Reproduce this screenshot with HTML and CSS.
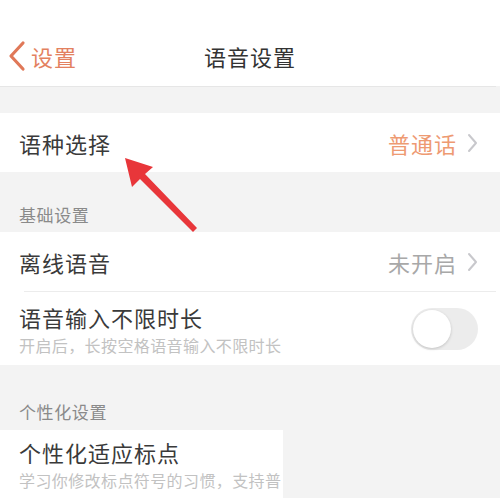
FILE: index.html
```html
<!DOCTYPE html>
<html lang="zh">
<head>
<meta charset="utf-8">
<link rel="stylesheet" href="styles.css">
</head>
<body>
<div class="page">
  <header class="nav">
    <div class="back">
      <svg class="back-icon" width="18" height="32" viewBox="0 0 18 32"><path d="M15 3 L3 16 L15 29" fill="none" stroke="#e07858" stroke-width="3.2" stroke-linecap="round" stroke-linejoin="round"/></svg>
      <span>设置</span>
    </div>
    <div class="title">语音设置</div>
  </header>
  <div class="gap gap-top"></div>
  <div class="row">
    <div class="row-title">语种选择</div>
    <div class="row-value orange">普通话<svg class="chev" width="11" height="20" viewBox="0 0 11 20"><path d="M2 2 L9 10 L2 18" fill="none" stroke="#c8c8cc" stroke-width="2" stroke-linecap="round" stroke-linejoin="round"/></svg></div>
  </div>
  <div class="section-label section-one">基础设置</div>
  <div class="row">
    <div class="row-title">离线语音</div>
    <div class="row-value grey">未开启<svg class="chev" width="11" height="20" viewBox="0 0 11 20"><path d="M2 2 L9 10 L2 18" fill="none" stroke="#c8c8cc" stroke-width="2" stroke-linecap="round" stroke-linejoin="round"/></svg></div>
  </div>
  <div class="row row-tall divided">
    <div class="row-text">
      <div class="row-title">语音输入不限时长</div>
      <div class="row-sub">开启后，长按空格语音输入不限时长</div>
    </div>
    <div class="toggle"><div class="knob"></div></div>
  </div>
  <div class="section-label section-two">个性化设置</div>
  <div class="last">
    <div class="last-cell">
      <div class="row-title">个性化适应标点</div>
      <div class="row-sub">学习你修改标点符号的习惯，支持普</div>
    </div>
  </div>
</div>
<svg class="arrow" width="500" height="498" viewBox="0 0 500 498"><polygon points="125,158 153,167 145,174 197,228 193,232 140,179 132,187" fill="#e8363a"/></svg>
</body>
</html>
```
FILE: styles.css
```css
* { box-sizing: border-box; }
html, body { margin: 0; padding: 0; }
body {
  width: 500px;
  height: 498px;
  overflow: hidden;
  background: #f3f3f3;
  font-family: "Noto Sans CJK SC", "Noto Sans", sans-serif;
  color: #333;
  position: relative;
}
.page { display: flex; flex-direction: column; }
.nav {
  height: 86px;
  background: #fff;
  position: relative;
  display: flex;
  align-items: center;
  justify-content: center;
  padding-top: 26px;
}
.back {
  position: absolute;
  left: 8px;
  top: 40px;
  display: flex;
  align-items: center;
  gap: 5px;
  color: #e38160;
  font-size: 22px;
  letter-spacing: 1px;
  line-height: 30px;
}
.back-icon { display: block; }
.title { font-size: 22px; letter-spacing: 1px; color: #333; line-height: 30px; }
.gap-top { height: 27px; border-top: 1px solid #e6e6e6; background: #f3f3f3; margin-right: 4px; }
.row {
  background: #fff;
  height: 59px;
  display: flex;
  align-items: center;
  justify-content: space-between;
  padding: 0 22px 0 19px;
}
.row-title { font-size: 22px; letter-spacing: 1px; color: #3a3a3a; line-height: 30px; }
.row-value { display: flex; align-items: center; gap: 10px; font-size: 22px; letter-spacing: 1px; line-height: 30px; }
.orange { color: #ee9a72; }
.grey { color: #a8a8a8; }
.chev { display: block; }
.section-label {
  font-size: 17px;
  color: #8a8a8a;
  letter-spacing: 0.6px;
  padding-left: 19px;
  display: flex;
  align-items: flex-end;
  padding-bottom: 5px;
}
.section-one { height: 60px; }
.section-two { height: 65px; padding-bottom: 6px; }
.row-tall { height: 74px; padding-right: 22px; }
.divided { position: relative; }
.divided::before {
  content: "";
  position: absolute;
  left: 24px;
  right: 4px;
  top: 0;
  height: 1px;
  background: #ececec;
}
.row-text { display: flex; flex-direction: column; padding-top: 2px; }
.row-sub { font-size: 16px; color: #c2c2c2; line-height: 24px; letter-spacing: 0.4px; margin-top: 1px; }
.toggle {
  width: 67px;
  height: 42px;
  border-radius: 21px;
  background: #ececec;
  position: relative;
  margin-top: 2px;
}
.knob {
  position: absolute;
  left: 2px;
  top: 2px;
  width: 38px;
  height: 38px;
  border-radius: 50%;
  background: #fff;
  box-shadow: 0 1px 3px rgba(0,0,0,0.18);
}
.last { display: flex; height: 68px; }
.last-cell {
  width: 283px;
  background: #fff;
  overflow: hidden;
  white-space: nowrap;
  padding: 7px 0 0 19px;
}
.arrow { position: absolute; left: 0; top: 0; pointer-events: none; }
```
